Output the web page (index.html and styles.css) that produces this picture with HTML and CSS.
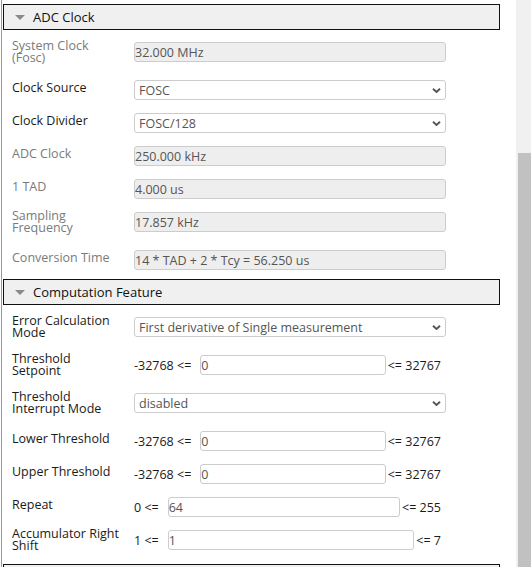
FILE: index.html
```html
<!DOCTYPE html>
<html lang="en">
<head>
<meta charset="utf-8">
<title>ADC Configuration</title>
<link rel="stylesheet" href="styles.css">
</head>
<body>
<div class="page">
  <div class="panel">
    <section class="group">
      <div class="group-head"><span class="caret"></span><span class="group-title">ADC Clock</span></div>
      <div class="group-body">
        <div class="row">
          <div class="label muted">System Clock<br>(Fosc)</div>
          <div class="field"><input class="box readonly" value="32.000 MHz" readonly></div>
        </div>
        <div class="row">
          <div class="label">Clock Source</div>
          <div class="field"><div class="select-wrap"><select class="box select"><option>FOSC</option></select><svg class="chev" viewBox="0 0 9 5"><path d="M1 0.8 L4.5 4 L8 0.8" fill="none" stroke="#555" stroke-width="1.9"/></svg></div></div>
        </div>
        <div class="row">
          <div class="label">Clock Divider</div>
          <div class="field"><div class="select-wrap"><select class="box select"><option>FOSC/128</option></select><svg class="chev" viewBox="0 0 9 5"><path d="M1 0.8 L4.5 4 L8 0.8" fill="none" stroke="#555" stroke-width="1.9"/></svg></div></div>
        </div>
        <div class="row">
          <div class="label muted">ADC Clock</div>
          <div class="field"><input class="box readonly" value="250.000 kHz" readonly></div>
        </div>
        <div class="row">
          <div class="label muted">1 TAD</div>
          <div class="field"><input class="box readonly" value="4.000 us" readonly></div>
        </div>
        <div class="row">
          <div class="label muted">Sampling<br>Frequency</div>
          <div class="field"><input class="box readonly" value="17.857 kHz" readonly></div>
        </div>
        <div class="row">
          <div class="label muted">Conversion Time</div>
          <div class="field"><input class="box readonly" value="14 * TAD + 2 * Tcy = 56.250 us" readonly></div>
        </div>
      </div>
    </section>
    <section class="group">
      <div class="group-head"><span class="caret"></span><span class="group-title">Computation Feature</span></div>
      <div class="group-body">
        <div class="row">
          <div class="label">Error Calculation<br>Mode</div>
          <div class="field"><div class="select-wrap"><select class="box select"><option>First derivative of Single measurement</option></select><svg class="chev" viewBox="0 0 9 5"><path d="M1 0.8 L4.5 4 L8 0.8" fill="none" stroke="#555" stroke-width="1.9"/></svg></div></div>
        </div>
        <div class="row">
          <div class="label">Threshold<br>Setpoint</div>
          <div class="field range"><span class="pre">-32768 &lt;=</span><input class="box" value="0"><span class="suf">&lt;= 32767</span></div>
        </div>
        <div class="row">
          <div class="label">Threshold<br>Interrupt Mode</div>
          <div class="field"><div class="select-wrap"><select class="box select"><option>disabled</option></select><svg class="chev" viewBox="0 0 9 5"><path d="M1 0.8 L4.5 4 L8 0.8" fill="none" stroke="#555" stroke-width="1.9"/></svg></div></div>
        </div>
        <div class="row">
          <div class="label">Lower Threshold</div>
          <div class="field range"><span class="pre">-32768 &lt;=</span><input class="box" value="0"><span class="suf">&lt;= 32767</span></div>
        </div>
        <div class="row">
          <div class="label">Upper Threshold</div>
          <div class="field range"><span class="pre">-32768 &lt;=</span><input class="box" value="0"><span class="suf">&lt;= 32767</span></div>
        </div>
        <div class="row">
          <div class="label">Repeat</div>
          <div class="field range"><span class="pre">0 &lt;=</span><input class="box" value="64"><span class="suf">&lt;= 255</span></div>
        </div>
        <div class="row">
          <div class="label">Accumulator Right<br>Shift</div>
          <div class="field range"><span class="pre">1 &lt;=</span><input class="box" value="1"><span class="suf">&lt;= 7</span></div>
        </div>
      </div>
    </section>
    <section class="group">
      <div class="group-head"><span class="caret"></span></div>
    </section>
  </div>
  <div class="scrollbar"><div class="thumb"></div></div>
</div>
</body>
</html>
```
FILE: styles.css
```css
* { box-sizing: border-box; }
html, body { margin: 0; padding: 0; }
body {
  width: 532px;
  height: 567px;
  overflow: hidden;
  background: #fff;
  font-family: "Open Sans", "Noto Sans", sans-serif;
  font-size: 12.5px;
  color: #1a1a1a;
}
.page { display: flex; height: 567px; }
.panel {
  width: 515px;
  flex: none;
  margin-left: 1px;
  border-left: 1px solid #8f9aab;
  padding-top: 4px;
  padding-left: 1px;
  overflow: hidden;
}
.group-head {
  width: 497px;
  height: 26px;
  border: 1px solid #111;
  background: #f0f0f0;
  display: flex;
  align-items: center;
  padding-left: 11px;
}
.caret {
  width: 0; height: 0;
  border-left: 5px solid transparent;
  border-right: 5px solid transparent;
  border-top: 5px solid #8a8a8a;
  margin-right: 8px;
}
.group-title { font-size: 13px; color: #111; line-height: 1; }
.group-body { padding: 10px 0 9px 9px; }
.row { display: flex; align-items: center; }
.row + .row { margin-top: 11px; }
.label {
  width: 122px;
  flex: none;
  line-height: 12px;
  padding-bottom: 3px;
  white-space: nowrap;
  color: #1a1a1a;
}
.label.muted { color: #7a7a7a; }
.field {
  width: 312px;
  flex: none;
  align-self: flex-start;
  padding-top: 2px;
  display: flex;
  align-items: center;
}
.box {
  display: block;
  width: 100%;
  height: 20px;
  margin: 0;
  padding: 0;
  border: 1px solid #cccccc;
  border-radius: 3px;
  background: #fff;
  font: inherit;
  color: #555;
  outline: none;
}
.readonly { background: #eeeeee; }
.select-wrap { position: relative; width: 100%; }
.select {
  appearance: none;
  -webkit-appearance: none;
  padding-left: 4px;
}
.chev {
  position: absolute;
  right: 5px;
  top: 8px;
  width: 9px;
  height: 5px;
  pointer-events: none;
}
.range .box { flex: 1; width: auto; min-width: 0; }
.pre { margin-right: 9px; white-space: nowrap; color: #1a1a1a; }
.suf { margin-left: 2px; padding-right: 5px; white-space: nowrap; color: #1a1a1a; }
.scrollbar {
  width: 15px;
  flex: none;
  background: #f0f0f0;
  margin-right: 2px;
  padding-top: 153px;
  padding-left: 2px;
}
.thumb { width: 13px; height: 420px; background: #c1c1c1; }
```
